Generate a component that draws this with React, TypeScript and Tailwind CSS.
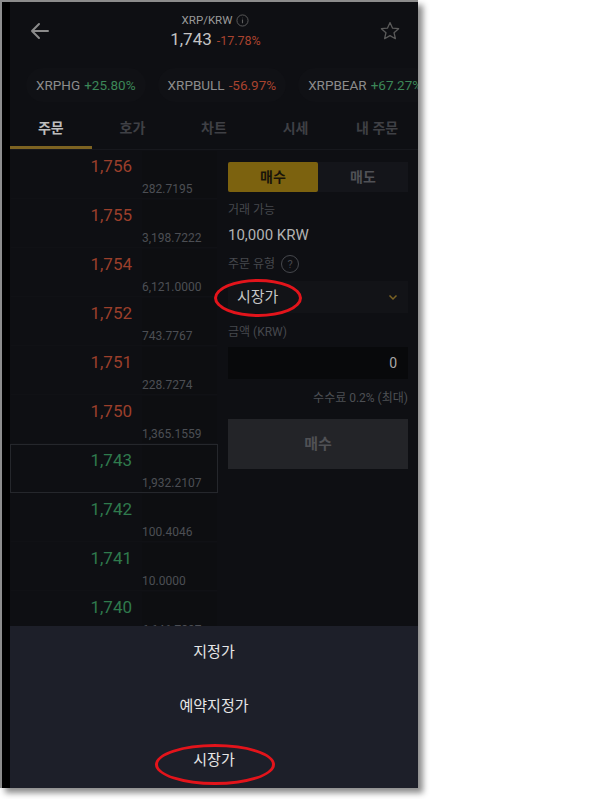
import React from "react";

const FONT = "font-['Roboto','Noto_Sans_CJK_KR',sans-serif]";

type Row = { price: string; qty: string; up: boolean; current?: boolean };

const rows: Row[] = [
  { price: "1,756", qty: "282.7195", up: false },
  { price: "1,755", qty: "3,198.7222", up: false },
  { price: "1,754", qty: "6,121.0000", up: false },
  { price: "1,752", qty: "743.7767", up: false },
  { price: "1,751", qty: "228.7274", up: false },
  { price: "1,750", qty: "1,365.1559", up: false },
  { price: "1,743", qty: "1,932.2107", up: true, current: true },
  { price: "1,742", qty: "100.4046", up: true },
  { price: "1,741", qty: "10.0000", up: true },
  { price: "1,740", qty: "6,646.7897", up: true },
];

const tickers = [
  { name: "XRPHG", pct: "+25.80%", up: true },
  { name: "XRPBULL", pct: "-56.97%", up: false },
  { name: "XRPBEAR", pct: "+67.27%", up: true },
];

const tabs = ["주문", "호가", "차트", "시세", "내 주문"];

function Header() {
  return (
    <div className="h-[58px] flex items-center px-[16px] shrink-0">
      {/* back arrow */}
      <svg width="24" height="24" viewBox="0 0 24 24" className="ml-[2px]">
        <path d="M20 12H4M11 5l-7 7 7 7" fill="none" stroke="#8b8b8b" strokeWidth="2" strokeLinecap="round" strokeLinejoin="round" />
      </svg>
      <div className="flex-1 flex flex-col items-center pt-[2px]">
        <div className="flex items-center gap-[4px] text-[11.5px] text-[#9a9a9a] leading-[16px]">
          XRP/KRW
          <svg width="13" height="13" viewBox="0 0 14 14">
            <circle cx="7" cy="7" r="6" fill="none" stroke="#5e5e5e" strokeWidth="1" />
            <path d="M7 6v4M7 4v0.6" stroke="#5e5e5e" strokeWidth="1.2" />
          </svg>
        </div>
        <div className="flex items-baseline gap-[5px] leading-[22px]">
          <span className="text-[17px] text-[#c4c4c4]">1,743</span>
          <span className="text-[12.5px] text-[#a9432f]">-17.78%</span>
        </div>
      </div>
      {/* star */}
      <svg width="22" height="22" viewBox="0 0 24 24" className="mr-[1px]">
        <path
          d="M12 2.8l2.8 6.1 6.6.6-5 4.4 1.5 6.5L12 17l-5.9 3.4 1.5-6.5-5-4.4 6.6-.6z"
          fill="none"
          stroke="#5a5a5a"
          strokeWidth="1.4"
          strokeLinejoin="round"
        />
      </svg>
    </div>
  );
}

function Tickers() {
  return (
    <div className="h-[50px] flex items-center gap-[12px] pl-[16px] overflow-hidden whitespace-nowrap shrink-0">
      {tickers.map((t) => (
        <div key={t.name} className="flex items-center gap-[4px] h-[34px] px-[10px] rounded-full bg-[#101115] text-[13.5px] shrink-0">
          <span className="text-[#8c8c8c]">{t.name}</span>
          <span className={t.up ? "text-[#3c8758]" : "text-[#a9432f]"}>{t.pct}</span>
        </div>
      ))}
    </div>
  );
}

function Tabs() {
  return (
    <div className="h-[40px] flex border-b border-[#17181d] shrink-0">
      {tabs.map((t, i) => (
        <div
          key={t}
          className={
            "flex-1 flex items-center justify-center text-[14px] font-bold border-b-[3px] " +
            (i === 0 ? "text-[#bdbdbd] border-[#7d6322]" : "text-[#3f4045] border-transparent")
          }
        >
          {t}
        </div>
      ))}
    </div>
  );
}

function OrderBook() {
  return (
    <div className="w-[208px] flex flex-col shrink-0">
      {rows.map((r) => (
        <div
          key={r.price}
          className={
            "h-[49px] flex shrink-0 border " +
            (r.current ? "border-[#25272c]" : "border-transparent border-b-[#101115]")
          }
        >
          <div className="w-[122px] flex justify-end pt-[3px] pr-[1px]">
            <span className={"text-[17px] leading-[24px] " + (r.up ? "text-[#2f7a4d]" : "text-[#9b3f2b]")}>{r.price}</span>
          </div>
          <div className="flex-1 ml-[9px] pt-[25px] bg-[#0d0e11]">
            <span className="text-[12px] leading-[16px] text-[#4c4e54]">{r.qty}</span>
          </div>
        </div>
      ))}
    </div>
  );
}

function OrderForm() {
  return (
    <div className="flex-1 flex flex-col px-[10px] pt-[12px]">
      <div className="flex h-[30px] bg-[#14151a]">
        <div className="flex-1 flex items-center justify-center bg-[#7c620f] rounded-[2px] text-[14px] font-bold text-[#18140a]">매수</div>
        <div className="flex-1 flex items-center justify-center text-[14px] font-bold text-[#505156]">매도</div>
      </div>
      <div className="mt-[10px] text-[12px] leading-[16px] text-[#46484d]">거래 가능</div>
      <div className="mt-[7px] text-[15px] leading-[20px] text-[#b2b2b2]">10,000 KRW</div>
      <div className="mt-[9px] flex items-center gap-[6px] text-[12px] leading-[20px] text-[#46484d]">
        주문 유형
        <span className="w-[18px] h-[18px] rounded-full border border-[#46484d] flex items-center justify-center text-[11px] leading-none">?</span>
      </div>
      <div className="mt-[7px] h-[32px] flex items-center justify-between bg-[#121317] pl-[9px] pr-[9px]">
        <span className="text-[15px] text-[#c6c6c6]">시장가</span>
        <svg width="12" height="12" viewBox="0 0 12 12">
          <path d="M2.5 4.5l3.5 3.5 3.5-3.5" fill="none" stroke="#7a6224" strokeWidth="1.5" />
        </svg>
      </div>
      <div className="mt-[11px] text-[12px] leading-[16px] text-[#46484d]">금액 (KRW)</div>
      <div className="mt-[7px] h-[32px] flex items-center justify-end bg-[#08090b] pr-[11px]">
        <span className="text-[14px] text-[#a8a8a8]">0</span>
      </div>
      <div className="mt-[11px] text-right text-[12px] leading-[16px] text-[#4d4f54]">수수료 0.2% (최대)</div>
      <div className="mt-[13px] h-[50px] flex items-center justify-center bg-[#232428] text-[15px] font-bold text-[#505155]">매수</div>
    </div>
  );
}

function Sheet() {
  return (
    <div className="h-[162px] shrink-0 bg-[#1d1f29] flex flex-col">
      {["지정가", "예약지정가", "시장가"].map((s, i) => (
        <div key={s} className={"flex items-center justify-center text-[15px] text-[#e6e6e6] " + (i === 0 ? "h-[54px]" : "h-[56px]")}>
          {s}
        </div>
      ))}
    </div>
  );
}

export default function App() {
  return (
    <div className={"w-[600px] h-[799px] bg-white " + FONT}>
      <div className="flex w-[418px] h-[788px] border-t-2 border-l-2 border-[#8c8c8c] shadow-[5px_5px_6px_rgba(0,0,0,0.45)]">
        <div className="w-[8px] bg-black shrink-0" />
        <div className="relative w-[408px] flex flex-col bg-[#0e0f13] overflow-hidden">
          <Header />
          <Tickers />
          <Tabs />
          <div className="flex-1 flex overflow-hidden">
            <OrderBook />
            <OrderForm />
          </div>
          <Sheet />

          {/* red annotation marks */}
          <div className="absolute left-[204px] top-[277px] w-[88px] h-[38px] rounded-[50%] border-[3px] border-[#e3141b]" />
          <div className="absolute left-[145px] top-[742px] w-[120px] h-[41px] rounded-[50%] border-[3px] border-[#e3141b]" />
        </div>
      </div>
    </div>
  );
}
